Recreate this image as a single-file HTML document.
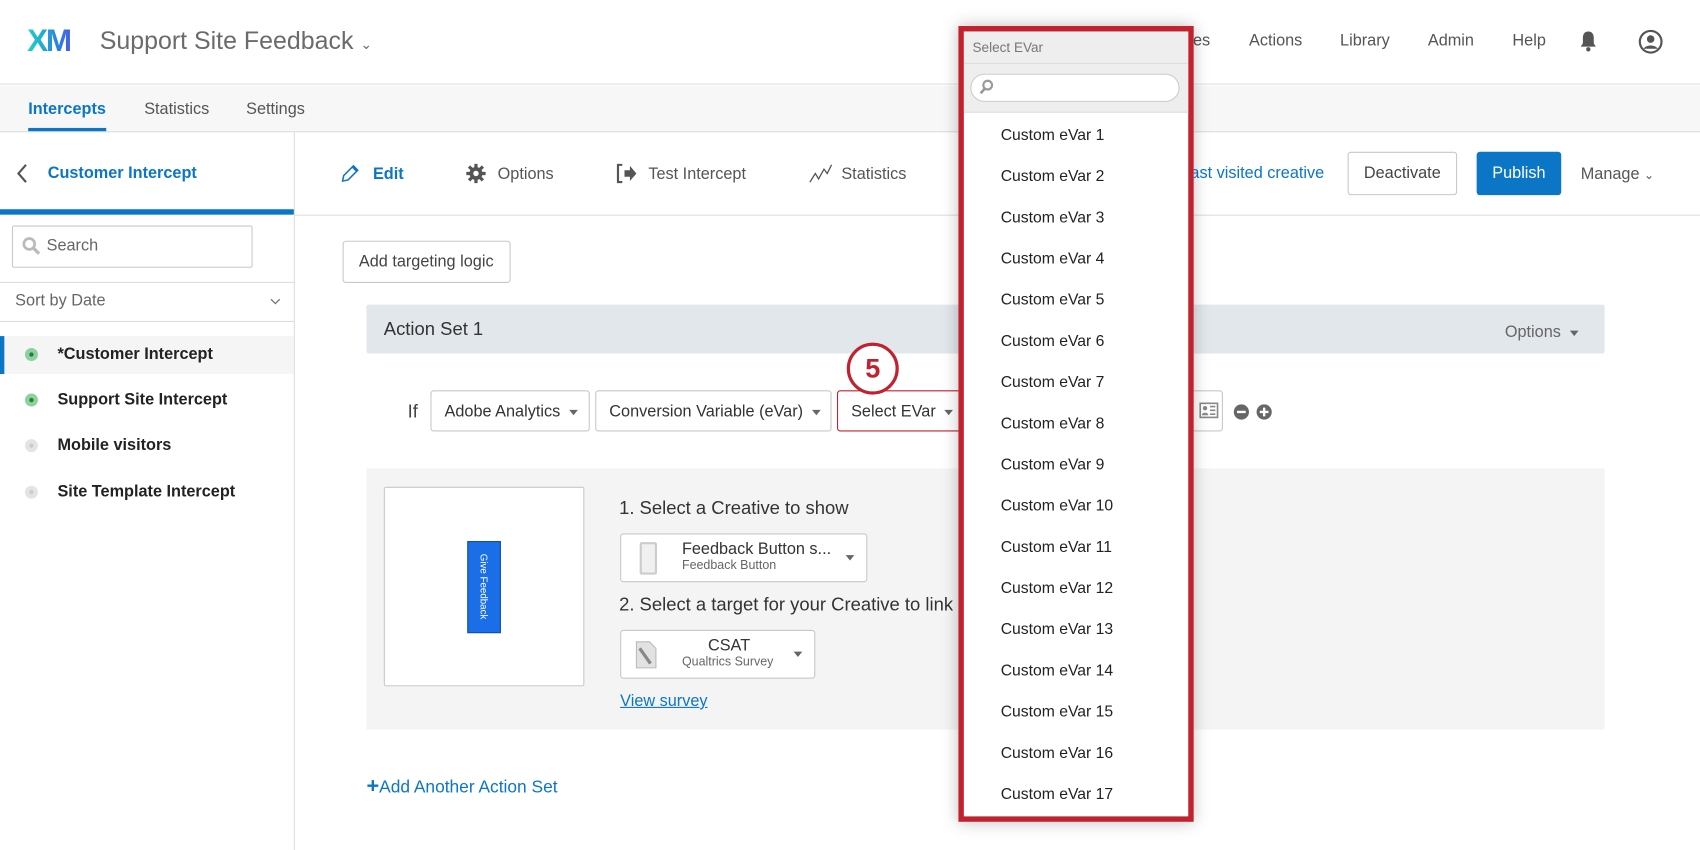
<!DOCTYPE html>
<html><head><meta charset="utf-8">
<style>
*{box-sizing:border-box;margin:0;padding:0}
html,body{width:1700px;height:850px;overflow:hidden;background:#fff}
body{font-family:"Liberation Sans",Arial,sans-serif;color:#333}
#w{position:absolute;left:0;top:0;width:1568px;height:784px;transform:scale(1.08418);transform-origin:0 0}
.a{position:absolute;white-space:nowrap}
.box{position:absolute;border:1px solid #c8c8c8;border-radius:3px;background:#fff}
.tri{display:inline-block;width:0;height:0;border-left:4px solid transparent;border-right:4px solid transparent;border-top:5px solid #666;vertical-align:middle}
.item{position:absolute;left:34px;font-size:14.5px;color:#222}
</style></head><body><div id="w">
<!-- header -->
<div class="a" style="left:0;top:0;width:1568px;height:78px;border-bottom:1px solid #e2e2e2"></div>
<div class="a" style="left:25px;top:22px;width:50px;font-size:29px;line-height:32px;font-weight:bold;letter-spacing:-2px;background:linear-gradient(90deg,#1fd3c6,#2a7de1 60%,#6b3fe0);-webkit-background-clip:text;background-clip:text;color:transparent">XM</div>
<div class="a" style="left:92px;top:24px;font-size:23px;color:#6b6b6b">Support Site Feedback <span style="font-size:13px">&#8964;</span></div>
<div class="a" style="left:1097px;top:29px;font-size:15px;color:#555">ies</div>
<div class="a" style="left:1152px;top:29px;font-size:15px;color:#555">Actions</div>
<div class="a" style="left:1236px;top:29px;font-size:15px;color:#555">Library</div>
<div class="a" style="left:1317px;top:29px;font-size:15px;color:#555">Admin</div>
<div class="a" style="left:1395px;top:29px;font-size:15px;color:#555">Help</div>
<svg class="a" style="left:1456px;top:28px" width="18" height="20" viewBox="0 0 18 20"><path d="M9 1c-3.5 0-5 2.5-5 6v5l-2 3h14l-2-3V7c0-3.5-1.5-6-5-6z" fill="#555"/><circle cx="9" cy="17.5" r="2" fill="#555"/></svg>
<svg class="a" style="left:1511px;top:27px" width="23" height="23" viewBox="0 0 23 23"><circle cx="11.5" cy="11.5" r="10" fill="none" stroke="#555" stroke-width="2"/><circle cx="11.5" cy="9" r="3.5" fill="#555"/><path d="M5 18c2-4 11-4 13 0" fill="#555"/></svg>
<!-- tabs -->
<div class="a" style="left:0;top:79px;width:1568px;height:43px;background:#f7f7f7;border-bottom:1px solid #ddd"></div>
<div class="a" style="left:26px;top:92px;font-size:15px;color:#0b76c5;font-weight:bold">Intercepts</div>
<div class="a" style="left:26px;top:118px;width:72px;height:3px;background:#0b76c5"></div>
<div class="a" style="left:133px;top:92px;font-size:15px;color:#555">Statistics</div>
<div class="a" style="left:227px;top:92px;font-size:15px;color:#555">Settings</div>
<!-- sidebar -->
<div class="a" style="left:271px;top:122px;width:1px;height:662px;background:#ddd"></div>
<svg class="a" style="left:14px;top:150px" width="12" height="20" viewBox="0 0 12 20"><path d="M10 2L3 10l7 8" fill="none" stroke="#555" stroke-width="2"/></svg>
<div class="a" style="left:44px;top:151px;font-size:15px;color:#0b76c5;font-weight:bold">Customer Intercept</div>
<div class="a" style="left:0;top:193px;width:271px;height:5px;background:#0b76c5"></div>
<div class="box" style="left:11px;top:208px;width:222px;height:39px;border-radius:2px"></div>
<svg class="a" style="left:20px;top:218px" width="18" height="18" viewBox="0 0 18 18"><circle cx="7" cy="7" r="5" fill="none" stroke="#bbb" stroke-width="2.5"/><path d="M11 11l5 5" stroke="#bbb" stroke-width="3"/></svg>
<div class="a" style="left:43px;top:218px;font-size:15px;color:#666">Search</div>
<div class="a" style="left:0;top:260px;width:271px;height:37px;border-top:1px solid #ddd;border-bottom:1px solid #ddd"></div>
<div class="a" style="left:14px;top:269px;font-size:15px;color:#666">Sort by Date</div>
<svg class="a" style="left:249px;top:275px" width="10" height="6" viewBox="0 0 10 6"><path d="M1 1l4 4 4-4" fill="none" stroke="#777" stroke-width="1.2"/></svg>
<div class="a" style="left:0;top:310px;width:271px;height:35px;background:#f5f5f5"></div>
<div class="a" style="left:0;top:310px;width:4px;height:35px;background:#0b76c5"></div>
<div class="a" style="left:23px;top:321px;width:12px;height:12px;border-radius:50%;background:#8fcfa2"><div style="margin:4px;width:4px;height:4px;border-radius:50%;background:#13883b"></div></div>
<div class="a" style="left:53px;top:318px;font-size:15px;font-weight:bold;color:#222">*Customer Intercept</div>
<div class="a" style="left:23px;top:363px;width:12px;height:12px;border-radius:50%;background:#8fcfa2"><div style="margin:4px;width:4px;height:4px;border-radius:50%;background:#13883b"></div></div>
<div class="a" style="left:53px;top:360px;font-size:15px;font-weight:bold;color:#222">Support Site Intercept</div>
<div class="a" style="left:23px;top:405px;width:12px;height:12px;border-radius:50%;background:#e4e4e4"><div style="margin:4px;width:4px;height:4px;border-radius:50%;background:#ccc"></div></div>
<div class="a" style="left:53px;top:402px;font-size:15px;font-weight:bold;color:#222">Mobile visitors</div>
<div class="a" style="left:23px;top:448px;width:12px;height:12px;border-radius:50%;background:#e4e4e4"><div style="margin:4px;width:4px;height:4px;border-radius:50%;background:#ccc"></div></div>
<div class="a" style="left:53px;top:445px;font-size:15px;font-weight:bold;color:#222">Site Template Intercept</div>
<!-- main toolbar -->
<div class="a" style="left:272px;top:198px;width:1296px;height:1px;background:#ddd"></div>
<svg class="a" style="left:313px;top:150px" width="20" height="20" viewBox="0 0 20 20"><path d="M3 17l1-5 9-9 4 4-9 9z M12 4l4 4" fill="none" stroke="#0b76c5" stroke-width="1.4"/></svg>
<div class="a" style="left:344px;top:152px;font-size:15px;color:#0b76c5;font-weight:bold">Edit</div>
<svg class="a" style="left:430px;top:151px" width="18" height="18" viewBox="0 0 18 18"><circle cx="9" cy="9" r="6" fill="#555"/><g stroke="#555" stroke-width="3"><path d="M9 0v18M0 9h18M2.6 2.6l12.8 12.8M15.4 2.6L2.6 15.4"/></g><circle cx="9" cy="9" r="2.5" fill="#fff"/></svg>
<div class="a" style="left:459px;top:152px;font-size:15px;color:#555">Options</div>
<svg class="a" style="left:568px;top:151px" width="20" height="18" viewBox="0 0 20 18"><path d="M6 1H2v16h4" fill="none" stroke="#555" stroke-width="2"/><path d="M8 6h5V2l6 7-6 7v-4H8z" fill="#555"/></svg>
<div class="a" style="left:598px;top:152px;font-size:15px;color:#555">Test Intercept</div>
<svg class="a" style="left:746px;top:150px" width="22" height="20" viewBox="0 0 22 20"><path d="M1 18l5-8 3 5 5-9 3 4 4-8" fill="none" stroke="#555" stroke-width="1.2"/></svg>
<div class="a" style="left:776px;top:152px;font-size:15px;color:#555">Statistics</div>
<div class="a" style="left:1098px;top:151px;font-size:15px;color:#0b76c5">ast visited creative</div>
<div class="box" style="left:1243px;top:140px;width:101px;height:40px"></div>
<div class="a" style="left:1258px;top:151px;font-size:15px;color:#444">Deactivate</div>
<div class="a" style="left:1362px;top:140px;width:78px;height:40px;background:#0b76c5;border-radius:3px;color:#fff;font-size:15px;text-align:center;line-height:40px">Publish</div>
<div class="a" style="left:1458px;top:152px;font-size:15px;color:#555">Manage <span style="font-size:11px">&#8964;</span></div>
<!-- content -->
<div class="box" style="left:316px;top:222px;width:155px;height:39px"></div>
<div class="a" style="left:331px;top:233px;font-size:15px;color:#444">Add targeting logic</div>
<div class="a" style="left:338px;top:281px;width:1142px;height:45px;background:#e1e7eb;border-radius:2px"></div>
<div class="a" style="left:354px;top:294px;font-size:17px;color:#333">Action Set 1</div>
<div class="a" style="left:1388px;top:298px;font-size:15px;color:#666">Options &nbsp;<span class="tri"></span></div>
<div class="a" style="left:376px;top:370px;font-size:17px;color:#444">If</div>
<div class="box" style="left:397px;top:360px;width:147px;height:38px"></div>
<div class="a" style="left:410px;top:371px;font-size:15px;color:#333">Adobe Analytics &nbsp;<span class="tri"></span></div>
<div class="box" style="left:549px;top:360px;width:218px;height:38px"></div>
<div class="a" style="left:562px;top:371px;font-size:15px;color:#333">Conversion Variable (eVar) &nbsp;<span class="tri"></span></div>
<div class="box" style="left:772px;top:360px;width:120px;height:38px;border-color:#c0222f"></div>
<div class="a" style="left:785px;top:371px;font-size:15px;color:#333">Select EVar &nbsp;<span class="tri"></span></div>
<div class="box" style="left:1090px;top:360px;width:38px;height:38px"></div>
<svg class="a" style="left:1106px;top:371px" width="18" height="15" viewBox="0 0 18 15"><rect x="1" y="1" width="16" height="13" fill="none" stroke="#888" stroke-width="1.5"/><circle cx="5.5" cy="5.5" r="2" fill="#888"/><path d="M2.5 12c0-3 6-3 6 0z" fill="#888"/><path d="M10 4h5M10 7.5h5M10 11h5" stroke="#888" stroke-width="1.5"/></svg>
<svg class="a" style="left:1137px;top:372px" width="40" height="16" viewBox="0 0 40 16"><circle cx="8" cy="8" r="7" fill="#666"/><path d="M4 8h8" stroke="#fff" stroke-width="2.2"/><circle cx="29" cy="8" r="7" fill="#666"/><path d="M25 8h8M29 4v8" stroke="#fff" stroke-width="2.2"/></svg>
<div class="a" style="left:781px;top:316px;width:48px;height:48px;border-radius:50%;border:3px solid #c0222f;background:#fff;color:#c0222f;font-size:25px;font-weight:bold;text-align:center;line-height:42px">5</div>
<div class="a" style="left:338px;top:432px;width:1142px;height:241px;background:#f4f4f4"></div>
<div class="box" style="left:354px;top:449px;width:185px;height:184px;border-radius:2px"></div>
<div class="a" style="left:431px;top:499px;width:31px;height:85px;background:#1a6ee8;border:1px solid #1150a8"></div>
<div class="a" style="left:446px;top:541px;font-size:9px;color:#fff;transform:translate(-50%,-50%) rotate(90deg)">Give Feedback</div>
<div class="a" style="left:571px;top:459px;font-size:17px;color:#333">1. Select a Creative to show</div>
<div class="box" style="left:572px;top:492px;width:228px;height:45px"></div>
<div class="a" style="left:590px;top:500px;width:16px;height:30px;border:2px solid #ccc;background:#f0f0f0;border-radius:2px"></div>
<div class="a" style="left:629px;top:498px;font-size:15px;color:#333">Feedback Button s...</div>
<div class="a" style="left:629px;top:516px;font-size:11.5px;color:#666">Feedback Button</div>
<span class="tri a" style="left:780px;top:512px"></span>
<div class="a" style="left:571px;top:548px;font-size:17px;color:#333">2. Select a target for your Creative to link</div>
<div class="box" style="left:572px;top:581px;width:180px;height:45px"></div>
<svg class="a" style="left:584px;top:590px" width="24" height="28" viewBox="0 0 24 28"><path d="M3 2h12l6 6v18H3z" fill="#e2e2e2" stroke="#bbb"/><path d="M6 8l10 14" stroke="#888" stroke-width="3"/></svg>
<div class="a" style="left:653px;top:587px;font-size:15px;color:#333">CSAT</div>
<div class="a" style="left:629px;top:605px;font-size:11.5px;color:#666">Qualtrics Survey</div>
<span class="tri a" style="left:732px;top:601px"></span>
<div class="a" style="left:572px;top:638px;font-size:15px;color:#0b76c5;text-decoration:underline">View survey</div>
<div class="a" style="left:338px;top:717px;font-size:16px;color:#0b76c5"><b style="font-size:20px;line-height:16px">+</b>Add Another Action Set</div>
<!-- dropdown -->
<div class="a" style="left:884px;top:24px;width:217px;height:734px;border:5px solid #c0222f;background:#fff;box-shadow:0 0 14px rgba(0,0,0,.25);overflow:hidden">
 <div style="position:absolute;left:0;top:0;width:207px;height:75px;background:#eee;border-bottom:1px solid #ddd"></div>
 <div class="a" style="left:8px;top:8px;font-size:12.5px;color:#777">Select EVar</div>
 <div style="position:absolute;left:0;top:29px;width:207px;height:1px;background:#ddd"></div>
 <div style="position:absolute;left:6px;top:39px;width:193px;height:26px;border:1px solid #ccc;border-radius:13px;background:#fff"></div>
 <svg class="a" style="left:14px;top:44px" width="14" height="15" viewBox="0 0 14 15"><circle cx="8" cy="5.5" r="4" fill="none" stroke="#999" stroke-width="2"/><path d="M5.5 8.5L1.5 13" stroke="#999" stroke-width="2.5"/></svg>
 <div class="item" style="top:88px">Custom eVar 1</div>
 <div class="item" style="top:126px">Custom eVar 2</div>
 <div class="item" style="top:164px">Custom eVar 3</div>
 <div class="item" style="top:202px">Custom eVar 4</div>
 <div class="item" style="top:240px">Custom eVar 5</div>
 <div class="item" style="top:278px">Custom eVar 6</div>
 <div class="item" style="top:316px">Custom eVar 7</div>
 <div class="item" style="top:354px">Custom eVar 8</div>
 <div class="item" style="top:392px">Custom eVar 9</div>
 <div class="item" style="top:430px">Custom eVar 10</div>
 <div class="item" style="top:468px">Custom eVar 11</div>
 <div class="item" style="top:506px">Custom eVar 12</div>
 <div class="item" style="top:544px">Custom eVar 13</div>
 <div class="item" style="top:582px">Custom eVar 14</div>
 <div class="item" style="top:620px">Custom eVar 15</div>
 <div class="item" style="top:658px">Custom eVar 16</div>
 <div class="item" style="top:696px">Custom eVar 17</div>
</div>
</div></body></html>
